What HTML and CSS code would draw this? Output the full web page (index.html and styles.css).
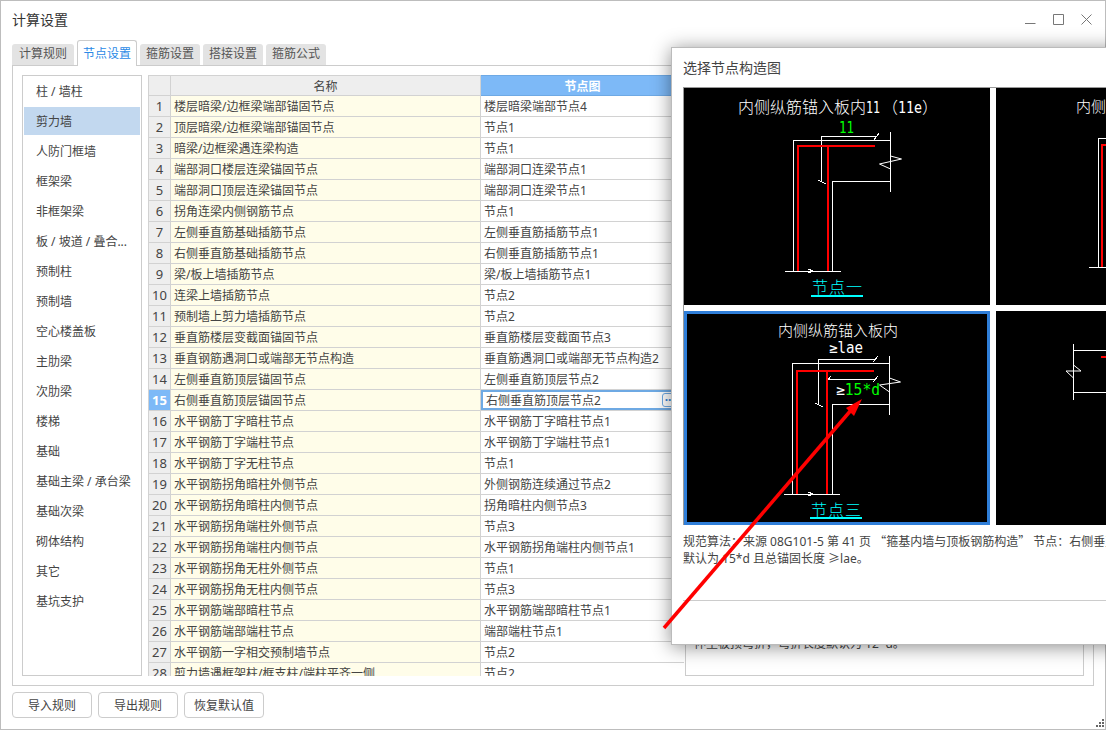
FILE: index.html
```html
<!DOCTYPE html>
<html lang="zh-CN">
<head>
<meta charset="utf-8">
<title>计算设置</title>
<link rel="stylesheet" href="styles.css">
</head>
<body>
<div class="window">
  <header class="titlebar">
    <span class="title">计算设置</span>
    <div class="controls">
      <svg class="ctl" viewBox="0 0 11 11"><path d="M0 9.5H10.5"/></svg>
      <svg class="ctl" viewBox="0 0 11 11"><path d="M.5 .5H10.5V10.5H.5Z"/></svg>
      <svg class="ctl" viewBox="0 0 11 11"><path d="M.5 .5L10.5 10.5M10.5 .5L.5 10.5"/></svg>
    </div>
  </header>
  <nav class="tabs">
    <span class="tab tab-first">计算规则</span>
    <span class="tab active">节点设置</span>
    <span class="tab">箍筋设置</span>
    <span class="tab">搭接设置</span>
    <span class="tab">箍筋公式</span>
  </nav>
  <main class="panel">
    <ul class="side">
      <li>柱 / 墙柱</li>
      <li class="current">剪力墙</li>
      <li>人防门框墙</li>
      <li>框架梁</li>
      <li>非框架梁</li>
      <li>板 / 坡道 / 叠合...</li>
      <li>预制柱</li>
      <li>预制墙</li>
      <li>空心楼盖板</li>
      <li>主肋梁</li>
      <li>次肋梁</li>
      <li>楼梯</li>
      <li>基础</li>
      <li>基础主梁 / 承台梁</li>
      <li>基础次梁</li>
      <li>砌体结构</li>
      <li>其它</li>
      <li>基坑支护</li>
    </ul>
    <div class="grid-wrap">
      <table class="grid">
        <colgroup><col class="c-num"><col class="c-name"><col class="c-node"></colgroup>
        <thead><tr class="head"><th></th><th>名称</th><th class="head-on">节点图</th></tr></thead>
        <tbody>
          <tr><th>1</th><td class="name">楼层暗梁/边框梁端部锚固节点</td><td>楼层暗梁端部节点4</td></tr>
          <tr><th>2</th><td class="name">顶层暗梁/边框梁端部锚固节点</td><td>节点1</td></tr>
          <tr><th>3</th><td class="name">暗梁/边框梁遇连梁构造</td><td>节点1</td></tr>
          <tr><th>4</th><td class="name">端部洞口楼层连梁锚固节点</td><td>端部洞口连梁节点1</td></tr>
          <tr><th>5</th><td class="name">端部洞口顶层连梁锚固节点</td><td>端部洞口连梁节点1</td></tr>
          <tr><th>6</th><td class="name">拐角连梁内侧钢筋节点</td><td>节点1</td></tr>
          <tr><th>7</th><td class="name">左侧垂直筋基础插筋节点</td><td>左侧垂直筋插筋节点1</td></tr>
          <tr><th>8</th><td class="name">右侧垂直筋基础插筋节点</td><td>右侧垂直筋插筋节点1</td></tr>
          <tr><th>9</th><td class="name">梁/板上墙插筋节点</td><td>梁/板上墙插筋节点1</td></tr>
          <tr><th>10</th><td class="name">连梁上墙插筋节点</td><td>节点2</td></tr>
          <tr><th>11</th><td class="name">预制墙上剪力墙插筋节点</td><td>节点2</td></tr>
          <tr><th>12</th><td class="name">垂直筋楼层变截面锚固节点</td><td>垂直筋楼层变截面节点3</td></tr>
          <tr><th>13</th><td class="name">垂直钢筋遇洞口或端部无节点构造</td><td>垂直筋遇洞口或端部无节点构造2</td></tr>
          <tr><th>14</th><td class="name">左侧垂直筋顶层锚固节点</td><td>左侧垂直筋顶层节点2</td></tr>
          <tr class="selected"><th>15</th><td class="name">右侧垂直筋顶层锚固节点</td><td class="editing">右侧垂直筋顶层节点2<span class="more">··</span></td></tr>
          <tr><th>16</th><td class="name">水平钢筋丁字暗柱节点</td><td>水平钢筋丁字暗柱节点1</td></tr>
          <tr><th>17</th><td class="name">水平钢筋丁字端柱节点</td><td>水平钢筋丁字端柱节点1</td></tr>
          <tr><th>18</th><td class="name">水平钢筋丁字无柱节点</td><td>节点1</td></tr>
          <tr><th>19</th><td class="name">水平钢筋拐角暗柱外侧节点</td><td>外侧钢筋连续通过节点2</td></tr>
          <tr><th>20</th><td class="name">水平钢筋拐角暗柱内侧节点</td><td>拐角暗柱内侧节点3</td></tr>
          <tr><th>21</th><td class="name">水平钢筋拐角端柱外侧节点</td><td>节点3</td></tr>
          <tr><th>22</th><td class="name">水平钢筋拐角端柱内侧节点</td><td>水平钢筋拐角端柱内侧节点1</td></tr>
          <tr><th>23</th><td class="name">水平钢筋拐角无柱外侧节点</td><td>节点1</td></tr>
          <tr><th>24</th><td class="name">水平钢筋拐角无柱内侧节点</td><td>节点3</td></tr>
          <tr><th>25</th><td class="name">水平钢筋端部暗柱节点</td><td>水平钢筋端部暗柱节点1</td></tr>
          <tr><th>26</th><td class="name">水平钢筋端部端柱节点</td><td>端部端柱节点1</td></tr>
          <tr><th>27</th><td class="name">水平钢筋一字相交预制墙节点</td><td>节点2</td></tr>
          <tr><th>28</th><td class="name">剪力墙遇框架柱/框支柱/端柱平齐一侧</td><td>节点2</td></tr>
        </tbody>
      </table>
    </div>
    <aside class="note"><p>伸至板顶弯折，弯折长度默认为 12*d。</p></aside>
  </main>
  <footer class="actions">
    <button class="btn">导入规则</button>
    <button class="btn">导出规则</button>
    <button class="btn">恢复默认值</button>
  </footer>
  <svg class="grip" viewBox="0 0 9 9"><path d="M7 0h2v2H7zM4 3h2v2H4zM7 3h2v2H7zM1 6h2v2H1zM4 6h2v2H4zM7 6h2v2H7z"/></svg>
</div>

<section class="dialog">
  <h2 class="dlg-title">选择节点构造图</h2>
  <div class="tiles">
    <div class="tile">
      <svg class="cad" viewBox="684 88 306 217">
        <text class="cjk white" x="738" y="113" font-size="16">内侧纵筋锚入板内<tspan class="mono" x="866" textLength="14" lengthAdjust="spacingAndGlyphs">11</tspan><tspan x="882">（</tspan><tspan class="mono" x="898" textLength="24" lengthAdjust="spacingAndGlyphs">11e</tspan><tspan x="922">）</tspan></text>
        <text class="mono green" x="839" y="133" font-size="16" textLength="15" lengthAdjust="spacingAndGlyphs">11</text>
        <path class="wire" d="M793 271V140H890M890 132V192M832 271V181H890M785 271H841M821 181V136H877M874 140L879 133M818 180L826 184M808 269L813 271L808 273"/>
        <polyline class="wire thin" points="890.5,156 901.5,159 879.5,164 890.5,169"/>
        <path class="rebar" d="M798 271V146H875M828 271V146"/>
        <text class="cjk cyan" x="812" y="293" font-size="16" letter-spacing="1">节点一</text>
        <rect class="cyan-bar" x="811" y="295" width="52" height="2"/>
      </svg>
    </div>
    <div class="tile">
      <svg class="cad" viewBox="996 88 306 217">
        <text class="cjk white" x="1076" y="112" font-size="15">内侧纵筋锚入板内</text>
        <path class="wire" d="M1098 267V138H1200M1089 267H1150"/>
        <path class="rebar" d="M1102 267V145H1200"/>
      </svg>
    </div>
    <div class="tile selected-tile">
      <svg class="cad" viewBox="684 311 306 214">
        <text class="cjk white" x="778" y="336" font-size="15">内侧纵筋锚入板内</text>
        <text class="mono white" x="829" y="353" font-size="15" textLength="34" lengthAdjust="spacingAndGlyphs">≥lae</text>
        <path class="wire" d="M792 494V363H889M889 356V415M832 494V404H889M784 494H840M818 404V359H876M873 362L878 356M815 403L823 407M808 492L813 494L808 496M826 379H876M826 382L831 376M873 382L878 376"/>
        <polyline class="wire thin" points="889.5,378 900.5,382 879.5,385 889.5,392"/>
        <path class="rebar" d="M797 494V371H874M827 494V371"/>
        <text class="mono" x="836" y="395" font-size="15" textLength="44" lengthAdjust="spacingAndGlyphs"><tspan class="white">≥</tspan><tspan class="green">15*d</tspan></text>
        <text class="cjk cyan" x="811" y="516" font-size="16" letter-spacing="1">节点三</text>
        <rect class="cyan-bar" x="810" y="517" width="52" height="2"/>
      </svg>
    </div>
    <div class="tile">
      <svg class="cad" viewBox="996 311 306 214">
        <path class="wire" d="M1073 344V400M1073 350H1200M1073 392H1200"/>
        <polyline class="wire thin" points="1073.5,365 1081,371 1066,371 1073.5,378"/>
        <path class="rebar" d="M1101 357H1200"/>
      </svg>
    </div>
  </div>
  <div class="dlg-text">
    <p>规范算法：来源 08G101-5 第 41 页 <span class="wide-quote">“</span>箍基内墙与顶板钢筋构造<span class="wide-quote">”</span> 节点：右侧垂直筋顶层锚固，</p>
    <p>默认为 15*d 且总锚固长度 ≥lae。</p>
  </div>
  <div class="dlg-rule"></div>
</section>

<svg class="arrow" viewBox="0 0 1106 730">
  <path class="arrow-line" d="M664 628L852 409"/>
  <polygon class="arrow-head" points="862,399 846,408 854,416"/>
</svg>
</body>
</html>
```

FILE: styles.css
```css
* { box-sizing: border-box; }

html, body {
  margin: 0;
  height: 730px;
  overflow: hidden;
  background: #fff;
}

body {
  position: relative;
  font: 12px/17px "Noto Sans", "Noto Sans CJK SC", sans-serif;
  color: #333;
}

.window {
  position: relative;
  width: 1106px;
  height: 730px;
  border: 1px solid #bdbdbd;
  background: #fff;
  display: flex;
  flex-direction: column;
}

.titlebar {
  height: 39px;
  flex: none;
  display: flex;
  align-items: center;
  justify-content: space-between;
  padding: 0 13px 2px 11px;
}

.title {
  font-size: 14px;
}

.controls {
  display: flex;
  gap: 17px;
}

.ctl {
  width: 11px;
  height: 11px;
  fill: none;
  stroke: #777;
  stroke-width: 1;
}

.tabs {
  height: 25px;
  flex: none;
  display: flex;
  align-items: flex-end;
  gap: 3px;
  padding-left: 11px;
  position: relative;
  z-index: 1;
}

.tab {
  width: 60px;
  height: 21px;
  line-height: 20px;
  text-align: center;
  background: #e3e3e3;
  color: #555;
  border-radius: 3px 3px 0 0;
}

.tab-first {
  width: 62px;
}

.tab.active {
  height: 26px;
  margin-bottom: -1px;
  line-height: 25px;
  background: #fff;
  color: #2b8ae6;
  border: 1px solid #ccc;
  border-bottom: 0;
}

.panel {
  flex: none;
  width: 1082px;
  height: 621px;
  margin-left: 11px;
  padding: 9px;
  border: 1px solid #ccc;
  display: flex;
}

.side {
  flex: none;
  width: 120px;
  margin: 0 6px 0 0;
  padding: 1px;
  list-style: none;
  border: 1px solid #ccc;
  display: flex;
  flex-direction: column;
  gap: 2px;
}

.side li {
  height: 28px;
  line-height: 30px;
  padding-left: 12px;
  white-space: nowrap;
  color: #444;
}

.side li.current {
  background: #c2d8ef;
}

.grid-wrap {
  flex: none;
  width: 536px;
  height: 601px;
  margin-right: 1px;
  overflow: hidden;
}

.grid {
  width: 536px;
  table-layout: fixed;
  border-collapse: collapse;
}

.c-num { width: 22px; }
.c-name { width: 310px; }
.c-node { width: 204px; }

.grid tr {
  height: 21px;
}

.grid tr.head {
  height: 20px;
}

.grid th,
.grid td {
  padding: 0 0 0 3px;
  border: 1px solid #d2d2d2;
  font-weight: 400;
  white-space: nowrap;
  overflow: hidden;
  text-align: left;
  line-height: 19px;
  color: #444;
}

.grid th {
  padding: 0;
  text-align: center;
  background: #eee;
  font-size: 13px;
}

.grid thead th {
  padding-top: 2px;
  line-height: 17px;
  font-size: 12px;
}

.grid thead th.head-on {
  background: #7db9f7;
  color: #fff;
  font-weight: 700;
  border-color: #6ea9e4;
}

.grid td.name {
  background: #fffde9;
}

.grid .selected th {
  background: #7db9f7;
  color: #fff;
  font-weight: 700;
}

.grid td.editing {
  position: relative;
  padding-left: 5px;
  box-shadow: inset 0 0 0 2px #6ea9e3;
}

.more {
  position: absolute;
  top: 3px;
  right: 10px;
  width: 12px;
  height: 14px;
  border: 1px solid #6ea9e3;
  border-radius: 3px;
  color: #2f7fd6;
  font-weight: 700;
  font-size: 12px;
  line-height: 11px;
  text-align: center;
}

.note {
  flex: 1;
  border: 1px solid #ccc;
  display: flex;
  flex-direction: column;
  justify-content: flex-end;
  padding: 0 8px 23px;
}

.note p {
  margin: 0;
  color: #444;
}

.actions {
  flex: none;
  display: flex;
  gap: 6px;
  padding: 6px 0 0 11px;
}

.btn {
  width: 80px;
  height: 26px;
  padding: 0;
  background: #fff;
  border: 1px solid #ccc;
  border-radius: 4px;
  font: inherit;
  color: #444;
}

.grip {
  position: absolute;
  right: 1px;
  bottom: 1px;
  width: 9px;
  height: 9px;
  fill: #666;
}

.dialog {
  position: absolute;
  left: 671px;
  top: 47px;
  width: 640px;
  height: 598px;
  background: #fff;
  border: 1px solid #bbb;
  box-shadow: 0 2px 18px rgba(0, 0, 0, .45);
  padding-left: 11px;
}

.dlg-title {
  margin: 0;
  height: 39px;
  font-size: 14px;
  font-weight: 400;
  line-height: 39px;
  color: #444;
}

.tiles {
  display: grid;
  grid-template-columns: 306px 306px;
  grid-template-rows: 217px 214px;
  gap: 6px;
  width: max-content;
  border-left: 1px solid #999;
  border-top: 1px solid #999;
}

.tile {
  background: #000;
  overflow: hidden;
}

.selected-tile {
  outline: 3px solid #2f7ed8;
  outline-offset: -3px;
}

.cad {
  display: block;
  width: 100%;
  height: 100%;
}

.wire {
  fill: none;
  stroke: #fff;
  stroke-width: 1;
  shape-rendering: crispEdges;
}

.wire.thin {
  shape-rendering: auto;
}

.rebar {
  fill: none;
  stroke: #f00;
  stroke-width: 2;
  shape-rendering: crispEdges;
}

.cjk {
  font-family: "Noto Sans CJK SC", sans-serif;
  font-weight: 300;
}

.mono {
  font-family: "DejaVu Sans Mono", monospace;
}

.white { fill: #fff; }
.green { fill: #0f0; }
.cyan { fill: #0ff; }
.cyan-bar { fill: #0ff; }

.dlg-text {
  margin-top: 7px;
  white-space: nowrap;
}

.dlg-text p {
  margin: 0;
  color: #444;
}

.wide-quote {
  font-family: "Noto Sans CJK SC", sans-serif;
}

.dlg-rule {
  margin-top: 33px;
  border-top: 1px solid #ccc;
}

.arrow {
  position: absolute;
  left: 0;
  top: 0;
  width: 1106px;
  height: 730px;
  pointer-events: none;
}

.arrow-line {
  fill: none;
  stroke: #f00;
  stroke-width: 3.5;
}

.arrow-head {
  fill: #f00;
}
```
